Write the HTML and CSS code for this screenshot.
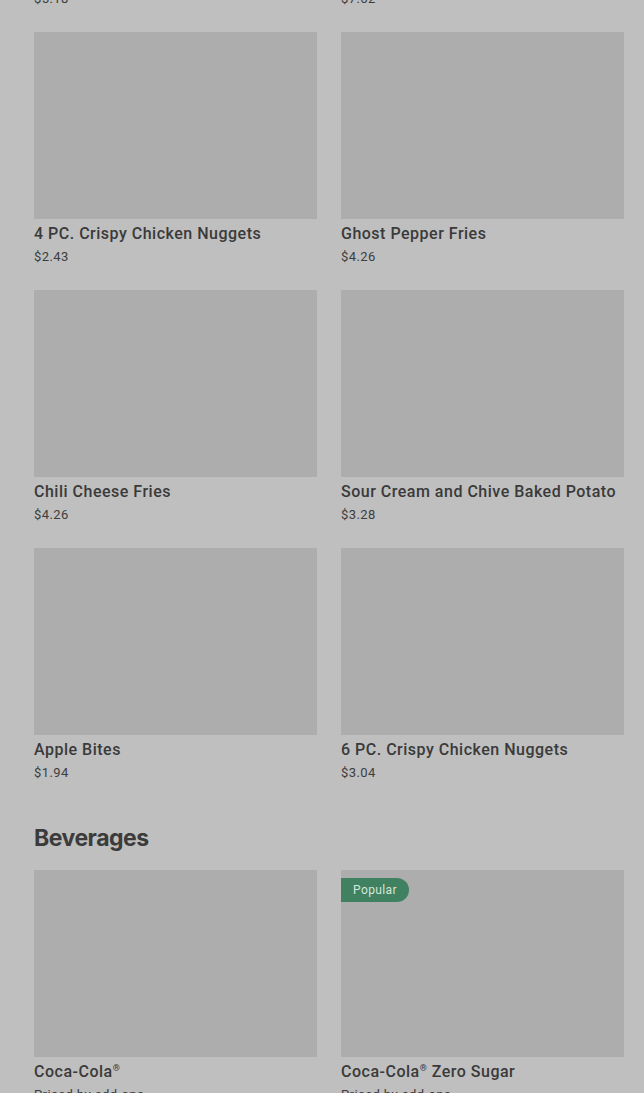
FILE: index.html
```html
<!DOCTYPE html>
<html lang="en">
<head>
  <meta charset="UTF-8" />
  <meta name="viewport" content="width=device-width, initial-scale=1.0"/>
  <title>Menu</title>
  <link rel="stylesheet" href="styles.css">
</head>
<body>
  <div class="menu">
    <!-- Sides (continued) -->
    <section class="section">
      <div class="grid">
        <div class="item">
          <div class="thumb"></div>
          <h3>Large Fries</h3>
          <p>$5.18</p>
        </div>
        <div class="item">
          <div class="thumb"></div>
          <h3>Crispy Chicken Sandwich</h3>
          <p>$7.62</p>
        </div>
        <div class="item">
          <div class="thumb"></div>
          <h3>4 PC. Crispy Chicken Nuggets</h3>
          <p>$2.43</p>
        </div>
        <div class="item">
          <div class="thumb"></div>
          <h3>Ghost Pepper Fries</h3>
          <p>$4.26</p>
        </div>
        <div class="item">
          <div class="thumb"></div>
          <h3>Chili Cheese Fries</h3>
          <p>$4.26</p>
        </div>
        <div class="item">
          <div class="thumb"></div>
          <h3>Sour Cream and Chive Baked Potato</h3>
          <p>$3.28</p>
        </div>
        <div class="item">
          <div class="thumb"></div>
          <h3>Apple Bites</h3>
          <p>$1.94</p>
        </div>
        <div class="item">
          <div class="thumb"></div>
          <h3>6 PC. Crispy Chicken Nuggets</h3>
          <p>$3.04</p>
        </div>
      </div>
    </section>

    <!-- Beverages -->
    <section class="section">
      <h2 class="section-title">Beverages</h2>
      <div class="grid">
        <div class="item">
          <div class="thumb"></div>
          <h3>Coca-Cola<sup>®</sup></h3>
          <p>Priced by add-ons</p>
        </div>
        <div class="item">
          <div class="thumb">
            <span class="badge">Popular</span>
          </div>
          <h3>Coca-Cola<sup>®</sup> Zero Sugar</h3>
          <p>Priced by add-ons</p>
        </div>
      </div>
    </section>
  </div>
</body>
</html>
```

FILE: styles.css
```css
* {
  box-sizing: border-box;
  margin: 0;
  padding: 0;
}

html, body {
  height: 100%;
  overflow: hidden;
}

body {
  font-family: Roboto, 'Noto Sans', sans-serif;
  background-color: #bfbfbf;
  color: #3a3a3a;
}

.menu {
  padding: 0 20px 0 34px;
  margin-top: -226px; /* page is scrolled down */
}

.section + .section {
  margin-top: 40px;
}

.section-title {
  font-family: Inter, 'Noto Sans', sans-serif;
  font-size: 23px;
  font-weight: 700;
  line-height: 32px;
  letter-spacing: -0.5px;
  color: #3b3b3b;
  margin-bottom: 16px;
}

.grid {
  display: grid;
  grid-template-columns: 283px 283px;
  column-gap: 24px;
  row-gap: 24px;
}

.thumb {
  position: relative;
  height: 187px;
  background-color: #adadad;
}

.item h3 {
  font-size: 16px;
  font-weight: 500;
  line-height: 20px;
  letter-spacing: 0.5px;
  margin-top: 5px;
  white-space: nowrap;
  color: #3a3a3a;
}

.item h3 sup {
  font-size: 9px;
  line-height: 0;
  vertical-align: 6px;
}

.item p {
  font-size: 13px;
  line-height: 18px;
  letter-spacing: 0.4px;
  margin-top: 4px;
  color: #3d3d3d;
}

.badge {
  position: absolute;
  top: 8px;
  left: 0;
  height: 24px;
  padding: 0 12px;
  line-height: 24px;
  font-size: 12px;
  letter-spacing: 0.4px;
  color: #d6e6dc;
  background-color: #3f8160;
  border-radius: 0 12px 12px 0;
}
```
